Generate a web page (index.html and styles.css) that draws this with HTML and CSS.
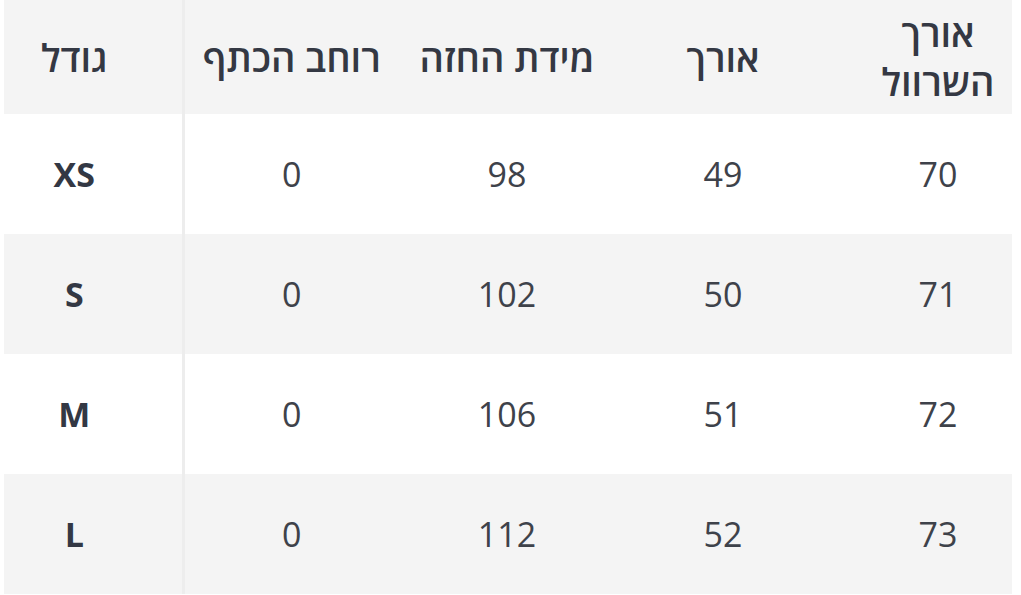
FILE: index.html
```html
<!DOCTYPE html>
<html lang="he" dir="rtl">
<head>
<meta charset="utf-8">
<title>טבלת מידות</title>
<link rel="stylesheet" href="styles.css">
</head>
<body>
<div class="wrap">
<table class="sizes">
  <colgroup>
    <col class="c-sleeve">
    <col class="c-mid">
    <col class="c-mid">
    <col class="c-mid">
    <col class="c-size">
  </colgroup>
  <thead>
    <tr class="head">
      <th class="sleeve">אורך<br>השרוול</th>
      <th>אורך</th>
      <th>מידת החזה</th>
      <th>רוחב הכתף</th>
      <th class="size">גודל</th>
    </tr>
  </thead>
  <tbody>
    <tr>
      <td class="sleeve">70</td><td>49</td><td>98</td><td>0</td><td class="size">XS</td>
    </tr>
    <tr class="alt">
      <td class="sleeve">71</td><td>50</td><td>102</td><td>0</td><td class="size">S</td>
    </tr>
    <tr>
      <td class="sleeve">72</td><td>51</td><td>106</td><td>0</td><td class="size">M</td>
    </tr>
    <tr class="alt">
      <td class="sleeve">73</td><td>52</td><td>112</td><td>0</td><td class="size">L</td>
    </tr>
  </tbody>
</table>
</div>
</body>
</html>
```

FILE: styles.css
```css
html, body {
  margin: 0;
  padding: 0;
  background: #ffffff;
}

body {
  font-family: "Open Sans", "DejaVu Sans", sans-serif;
  color: #3b3f47;
}

.wrap {
  margin-right: 9px;
  margin-left: 4px;
  width: 1008px;
}

.sizes {
  width: 1008px;
  table-layout: fixed;
  border-collapse: collapse;
  border-spacing: 0;
}

.c-sleeve { width: 181px; }
.c-mid { width: 216px; }
.c-size { width: 179px; }

.sizes th,
.sizes td {
  padding: 0;
  text-align: center;
  vertical-align: middle;
}

.sizes th {
  height: 114px;
  background: #f4f4f4;
  font-size: 38px;
  font-weight: 600;
  line-height: 49px;
  color: #343843;
}

.sizes td {
  height: 120px;
  font-size: 34px;
  font-weight: 400;
  color: #3e424a;
}

.sizes tr.alt td {
  background: #f4f4f4;
}

.sizes .sleeve {
  padding-left: 33px;
}

.sizes .size {
  padding-right: 37px;
  border-right: 3px solid #ededed;
}

.sizes td.size {
  font-weight: 700;
  color: #333844;
}
```
